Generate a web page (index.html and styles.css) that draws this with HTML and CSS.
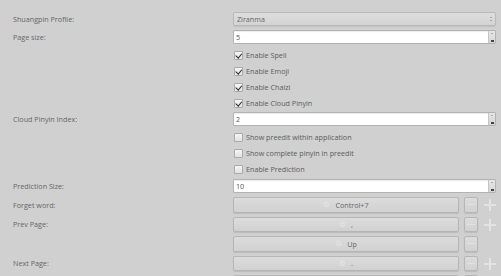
FILE: index.html
```html
<!DOCTYPE html>
<html>
<head>
    <title>Pinyin Settings</title>
    <link rel="stylesheet" href="styles.css">
</head>
<body>
    <div class="form">
        <div class="row row-combo">
            <label class="label">Shuangpin Profile:</label>
            <div class="combo">
                <span>Ziranma</span>
                <span class="combo-arrows"><i class="up"></i><i class="down"></i></span>
            </div>
        </div>

        <div class="row row-spin first-spin">
            <label class="label">Page size:</label>
            <div class="spin">
                <span>5</span>
                <span class="spin-arrows"><i class="up"></i><i class="down"></i></span>
            </div>
        </div>

        <div class="checks checks-a">
            <div class="row row-check"><span></span><label class="check"><span class="box checked"></span>Enable Spell</label></div>
            <div class="row row-check"><span></span><label class="check"><span class="box checked"></span>Enable Emoji</label></div>
            <div class="row row-check"><span></span><label class="check"><span class="box checked"></span>Enable Chaizi</label></div>
            <div class="row row-check"><span></span><label class="check"><span class="box checked"></span>Enable Cloud Pinyin</label></div>
        </div>

        <div class="row row-spin cloud-spin">
            <label class="label">Cloud Pinyin Index:</label>
            <div class="spin">
                <span>2</span>
                <span class="spin-arrows"><i class="up"></i><i class="down"></i></span>
            </div>
        </div>

        <div class="checks checks-b">
            <div class="row row-check"><span></span><label class="check"><span class="box"></span>Show preedit within application</label></div>
            <div class="row row-check"><span></span><label class="check"><span class="box"></span>Show complete pinyin in preedit</label></div>
            <div class="row row-check"><span></span><label class="check"><span class="box"></span>Enable Prediction</label></div>
        </div>

        <div class="row row-spin predict-spin">
            <label class="label">Prediction Size:</label>
            <div class="spin">
                <span>10</span>
                <span class="spin-arrows"><i class="up"></i><i class="down"></i></span>
            </div>
        </div>

        <div class="keys">
            <div class="row row-key">
                <label class="label">Forget word:</label>
                <div class="key-line">
                    <button class="key-button"><svg class="gear" viewBox="0 0 10 10"><path d="M5 0.5l1 1.3 1.6-.4.3 1.6 1.5.7-.7 1.5.7 1.5-1.5.7-.3 1.6-1.6-.4L5 9.5 4 8.2l-1.6.4-.3-1.6-1.5-.7.7-1.5-.7-1.5 1.5-.7.3-1.6 1.6.4z"/><circle cx="5" cy="5" r="1.6" class="hole"/></svg>Control+7</button>
                    <button class="small-button"><i class="minus"></i></button>
                    <span class="plus"></span>
                </div>
            </div>
            <div class="row row-key">
                <label class="label">Prev Page:</label>
                <div class="key-line">
                    <button class="key-button"><svg class="gear" viewBox="0 0 10 10"><path d="M5 0.5l1 1.3 1.6-.4.3 1.6 1.5.7-.7 1.5.7 1.5-1.5.7-.3 1.6-1.6-.4L5 9.5 4 8.2l-1.6.4-.3-1.6-1.5-.7.7-1.5-.7-1.5 1.5-.7.3-1.6 1.6.4z"/><circle cx="5" cy="5" r="1.6" class="hole"/></svg>,</button>
                    <button class="small-button"><i class="minus"></i></button>
                    <span class="plus"></span>
                </div>
            </div>
            <div class="row row-key">
                <span></span>
                <div class="key-line">
                    <button class="key-button"><svg class="gear" viewBox="0 0 10 10"><path d="M5 0.5l1 1.3 1.6-.4.3 1.6 1.5.7-.7 1.5.7 1.5-1.5.7-.3 1.6-1.6-.4L5 9.5 4 8.2l-1.6.4-.3-1.6-1.5-.7.7-1.5-.7-1.5 1.5-.7.3-1.6 1.6.4z"/><circle cx="5" cy="5" r="1.6" class="hole"/></svg>Up</button>
                    <button class="small-button"><i class="minus"></i></button>
                    <span class="plus blank"></span>
                </div>
            </div>
            <div class="row row-key">
                <label class="label">Next Page:</label>
                <div class="key-line">
                    <button class="key-button"><svg class="gear" viewBox="0 0 10 10"><path d="M5 0.5l1 1.3 1.6-.4.3 1.6 1.5.7-.7 1.5.7 1.5-1.5.7-.3 1.6-1.6-.4L5 9.5 4 8.2l-1.6.4-.3-1.6-1.5-.7.7-1.5-.7-1.5 1.5-.7.3-1.6 1.6.4z"/><circle cx="5" cy="5" r="1.6" class="hole"/></svg>.</button>
                    <button class="small-button"><i class="minus"></i></button>
                    <span class="plus"></span>
                </div>
            </div>
            <div class="row row-key">
                <span></span>
                <div class="key-line">
                    <button class="key-button"></button>
                    <button class="small-button"><i class="minus"></i></button>
                    <span class="plus blank"></span>
                </div>
            </div>
        </div>
    </div>
</body>
</html>
```

FILE: styles.css
```css
/* Base */
* {
    margin: 0;
    padding: 0;
    box-sizing: border-box;
    font-family: "Open Sans", "Noto Sans", sans-serif;
}

html, body {
    height: 100%;
    overflow: hidden;
}

body {
    background-color: #d0d0d0;
    color: #5f5f5f;
    font-size: 7.2px;
}

.form {
    padding: 12px 5px 0 0;
}

.row {
    display: grid;
    grid-template-columns: 233px 1fr;
    align-items: center;
}

.label {
    padding-left: 13px;
    color: #666;
    white-space: nowrap;
}

/* Combo box */
.row-combo {
    height: 14px;
}

.combo {
    height: 14px;
    display: flex;
    align-items: center;
    justify-content: space-between;
    padding: 0 3px;
    border: 1px solid #b9b9b9;
    border-radius: 2px;
    background: linear-gradient(#dedede, #d3d3d3);
    box-shadow: 0 1px 1px rgba(0, 0, 0, 0.08);
    color: #666;
}

.combo-arrows,
.spin-arrows {
    display: flex;
    flex-direction: column;
    align-items: center;
    justify-content: center;
    gap: 2px;
}

.combo-arrows i,
.spin-arrows i {
    display: block;
    width: 0;
    height: 0;
    border-left: 1.5px solid transparent;
    border-right: 1.5px solid transparent;
}

.combo-arrows .up,
.spin-arrows .up {
    border-bottom: 1.5px solid #777;
}

.combo-arrows .down,
.spin-arrows .down {
    border-top: 1.5px solid #777;
}

/* Spin box */
.row-spin {
    height: 14px;
}

.first-spin {
    margin-top: 4px;
}

.cloud-spin {
    margin-top: 1px;
}

.predict-spin {
    margin-top: 2px;
}

.spin {
    height: 14px;
    display: flex;
    align-items: stretch;
    justify-content: space-between;
    border: 1px solid #b3b3b3;
    border-radius: 1px;
    background: #fff;
    box-shadow: inset 0 1px 1px rgba(0, 0, 0, 0.08);
    color: #555;
}

.spin span:first-child {
    padding-left: 2px;
    line-height: 12px;
}

.spin-arrows {
    width: 7px;
    background: linear-gradient(#e6e6e6, #d6d6d6);
    border-left: 1px solid #c4c4c4;
    justify-content: space-between;
    padding: 2px 0 1px;
}

.spin-arrows .down {
    width: 3px;
    height: 2px;
    border: none;
    background: #444;
}

/* Check boxes */
.checks-a {
    margin-top: 3px;
}

.checks-b {
    margin-top: 3px;
}

.row-check {
    height: 16px;
}

.check {
    display: flex;
    align-items: center;
    gap: 3px;
    padding-left: 1px;
    color: #5c5c5c;
    white-space: nowrap;
}

.box {
    position: relative;
    width: 9px;
    height: 9px;
    border: 1px solid #aaa;
    border-radius: 1px;
    background: linear-gradient(#f4f4f4, #e2e2e2);
}

.box.checked::after {
    content: "";
    position: absolute;
    left: 1.5px;
    top: 0.5px;
    width: 2.5px;
    height: 4.5px;
    border-right: 1.5px solid #2b2b2b;
    border-bottom: 1.5px solid #2b2b2b;
    transform: rotate(40deg);
}

/* Key buttons */
.keys {
    margin-top: 4px;
    display: flex;
    flex-direction: column;
    gap: 4px;
}

.row-key {
    height: 15.5px;
}

.key-line {
    display: flex;
    align-items: stretch;
    height: 15.5px;
    gap: 5px;
}

.key-button,
.small-button {
    border: 1px solid #b6b6b6;
    border-radius: 2px;
    background: linear-gradient(#dcdcdc, #d1d1d1);
    box-shadow: 0 1px 1px rgba(0, 0, 0, 0.1);
    color: #666;
    font-size: 7.2px;
}

.key-button {
    flex: 1;
    display: flex;
    align-items: center;
    justify-content: center;
    gap: 5px;
}

.gear {
    width: 7px;
    height: 7px;
    fill: #e0e0e0;
}

.gear .hole {
    fill: #d6d6d6;
}

.small-button {
    width: 14px;
    display: flex;
    align-items: center;
    justify-content: center;
}

.minus {
    display: block;
    width: 8px;
    height: 1px;
    background: #e2e2e2;
}

.plus {
    position: relative;
    width: 13px;
}

.plus::before,
.plus::after {
    content: "";
    position: absolute;
    background: #e3e3e3;
}

.plus::before {
    left: 1px;
    right: 0;
    top: 7px;
    height: 2px;
}

.plus::after {
    left: 6px;
    top: 2px;
    bottom: 0;
    width: 2px;
    height: 12px;
}

.plus.blank::before,
.plus.blank::after {
    display: none;
}
```
